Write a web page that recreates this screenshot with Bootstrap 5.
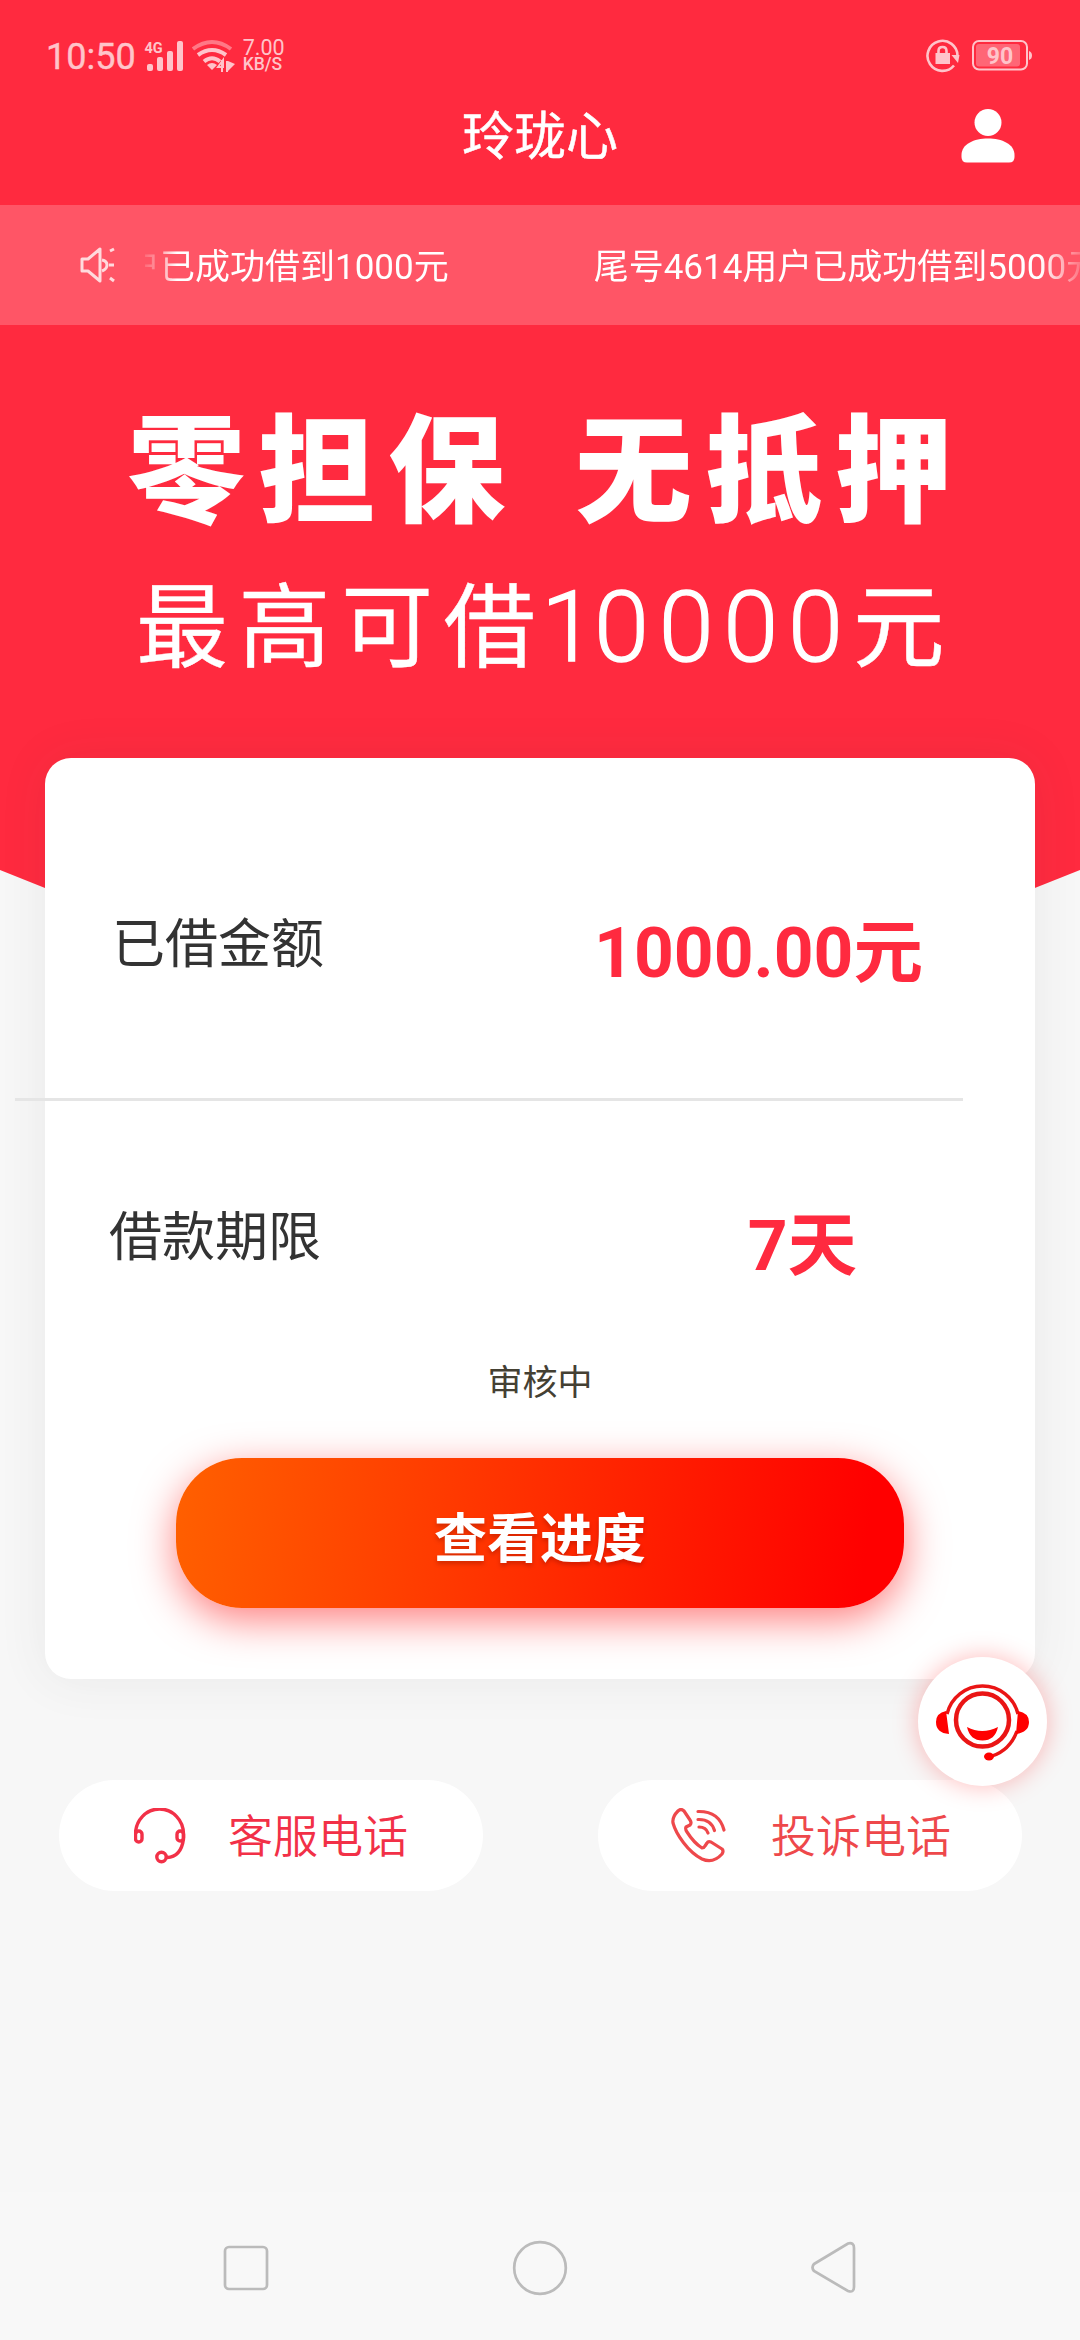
<!DOCTYPE html>
<html lang="zh-CN">
<head>
<meta charset="utf-8">
<meta name="viewport" content="width=device-width, initial-scale=1">
<title>玲珑心</title>
<link rel="stylesheet" href="https://cdn.jsdelivr.net/npm/bootstrap@5.3.0/dist/css/bootstrap.min.css">
<style>
body{font-family:Roboto,"Noto Sans CJK SC",sans-serif;background:#f7f7f7;line-height:1;color:#333;overflow:hidden}
svg{display:block;flex:none}
.screen{width:1080px;height:2340px;overflow:hidden}
.hero{background:#ff2a3f;height:936px;clip-path:polygon(0 0,100% 0,100% 870px,960px 918px,120px 918px,0 870px);margin-bottom:-178px;flex:none}
.status{height:100px;color:#ffc4ca;padding:39px 48px 0 46px}
.clock{font-size:36px;-webkit-text-stroke:.4px currentColor}
.signal{margin-left:7px}
.wifi{margin-left:9px}
.rate{font-size:21.500px;line-height:17px;margin-left:8px}
.rate-unit{font-size:17.500px;line-height:16px;font-weight:500}
.titlebar{height:105px;padding-top:12px;color:#fff}
.titlebar h1{font-size:52px;line-height:52px;font-weight:400;text-align:center;margin:0;width:156px;-webkit-text-stroke:.5px currentColor}
.side{width:100px}
.person{margin:-3px 0 0 -19px}
.notice{height:120px;background:#ff5566;color:#fff;font-size:35px;padding-left:80px}
.ticker{width:935px;height:60px;overflow:hidden;white-space:nowrap;margin-left:30px;padding-top:15px;
 -webkit-mask-image:linear-gradient(90deg,rgba(0,0,0,.15),rgba(0,0,0,.4) 14px,#000 32px,#000 895px,transparent 945px)}
.ticker span{margin-right:145px}
.ticker span:first-child{margin-left:-20px}
.slogan{font-family:"Noto Sans CJK SC",sans-serif;color:#fff;white-space:nowrap}
.slogan-a{font-weight:900;font-size:117px;line-height:122px;letter-spacing:13px;margin:76px 0 0 128px}
.slogan-a span+span{margin-left:57px}
.slogan-b{font-weight:400;font-size:92px;line-height:92px;letter-spacing:10.500px;margin:51px 0 0 136px;-webkit-text-stroke:.4px currentColor}
.digits{font-family:Roboto,sans-serif;font-weight:300;font-size:99px;line-height:0;letter-spacing:9.800px;margin-left:-5px;-webkit-text-stroke:1.300px currentColor;vertical-align:-1px}
.digits i{font-style:normal;letter-spacing:-2px}
.loan{margin:0 45px;border:0;border-radius:26px;height:921px;box-shadow:0 0 50px rgba(60,60,60,.08);flex:none}
.loan-row{height:340px;padding:161px 112px 0 67px;font-size:53px}
.loan-row strong{font-size:69.500px;font-weight:700;color:#ff2a3f}
.loan-row.term{height:264px;padding:111px 178px 0 64px}
.rule{height:3px;background:#e5e5e5;width:948px;margin-left:-30px;flex:none}
.state{font-size:35px;color:#444033;text-align:center;padding-top:1px}
.go{width:728px;height:150px;border:0;border-radius:66px;margin:57px 0 0 131px;background:linear-gradient(97deg,#ff6000,red 94%);box-shadow:0 12px 40px rgba(255,0,0,.5);color:#fff;font-size:53px;font-weight:700;line-height:1;padding:14px 0 0;text-shadow:0 3px 4px rgba(80,0,0,.25)}
.go:hover{color:#fff}
.calls{padding:101px 58px 0 59px}
.call-pill{width:424px;height:111px;border-radius:56px;background:#fff;border:0;font:350 45px/1 "Noto Sans CJK SC",sans-serif;color:#f23047}
.call-pill span{padding-bottom:4px;margin-left:42px}
.call-pill svg{margin-left:75px}
.call-pill.complaint{color:#ee484b}
.call-pill.complaint svg{margin-left:73px}
.call-pill.complaint span{margin-left:45px}
.fab{position:absolute;left:918px;top:1657px;width:129px;height:129px;border-radius:50%;background:#fff;box-shadow:0 0 26px rgba(255,0,0,.28)}
.sysnav{height:148px;background:#f8f8f8;padding:4px 223px 0 223px}
</style>
<script src="https://cdn.jsdelivr.net/npm/bootstrap@5.3.0/dist/js/bootstrap.bundle.min.js"></script>
</head>
<body>
<div class="screen position-relative d-flex flex-column">
 <header class="hero">
  <div class="status d-flex justify-content-between align-items-start">
   <div class="d-flex align-items-start">
    <span class="clock">10:50</span>
    <svg class="signal" width="40" height="34" viewBox="142 39 40 34" fill="#ffc4ca"><text x="143.500" y="52.500" font-size="14.500" font-weight="700">4G</text><rect x="146" y="64" width="6" height="7" rx="2"/><rect x="156" y="57" width="6" height="14" rx="2"/><rect x="166" y="51" width="6" height="20" rx="2"/><rect x="176" y="41" width="6" height="30" rx="2"/></svg>
    <svg class="wifi" width="43" height="34" viewBox="192 39 43 34" fill="none" stroke="#ffc4ca" stroke-width="4"><path d="M193 49Q212 35 231 49" stroke="#ff7886"/><path d="M198 55Q212 45 226 55M204 61.500Q212 55 220 61.500"/><path d="M207 65Q212 61 217 65L212 70Z" fill="#ffc4ca" stroke="none"/><path d="M218 67L223 60V67ZM222 60V72M227 61V72" stroke-width="2"/><path d="M228 61L235 64L228 71Z" fill="#ffc4ca" stroke="none"/></svg>
    <div class="rate"><div>7.00</div><div class="rate-unit">KB/S</div></div>
   </div>
   <div class="d-flex">
    <svg width="106" height="34" viewBox="926 39 106 34"><g fill="none" stroke="#ffc4ca" stroke-width="2.600"><path d="M954 65.500A15 15 0 1 1 957.500 56"/><path d="M938.500 54V51Q938.500 47 942.500 47Q946.500 47 946.500 51V54"/></g><path d="M935.500 53H950V64H935.500ZM951.500 55H959.500L958 63Z" fill="#ffc4ca"/><rect x="973" y="41" width="54" height="28.500" rx="6" fill="none" stroke="#ffc4ca" stroke-width="2"/><rect x="976" y="44" width="44" height="22.500" rx="3" fill="#ff6676"/><path d="M1029 51Q1032 52 1032 55.500Q1032 59 1029 60Z" fill="#ffc4ca"/><text x="1000" y="63.500" text-anchor="middle" font-size="23" font-weight="700" fill="#ffc4ca">90</text></svg>
   </div>
  </div>
  <div class="titlebar d-flex justify-content-between align-items-start">
   <span class="side"></span><h1>玲珑心</h1>
   <span class="side"><svg class="person" width="54" height="54" viewBox="0 0 54 54" fill="#fff"><circle cx="27" cy="13.500" r="13.500"/><path d="M.5 46C.5 35 13 29.500 27 29.500S53.500 35 53.500 46V48Q53.500 53.500 48 53.500H6Q.5 53.500 .5 48Z"/></svg></span>
  </div>
  <div class="notice d-flex align-items-center">
   <svg width="35" height="36" viewBox="0 0 35 36" fill="none" stroke="#ffdadd" stroke-width="3" stroke-linejoin="round"><path d="M2 12H8L20 2V34L8 24H2Z"/><path d="M22 13Q27 14 27 18Q27 22 22 24M29 18H34M30 4L34 2M30 31L34 34"/></svg>
   <div class="ticker"><span>户已成功借到1000元</span><span>尾号4614用户已成功借到5000元</span></div>
  </div>
  <div class="slogan slogan-a"><span>零担保</span><span>无抵押</span></div>
  <div class="slogan slogan-b">最高可借<span class="digits"><i>1</i>0000</span>元</div>
 </header>
 <main class="card loan">
  <div class="loan-row d-flex justify-content-between align-items-start"><span>已借金额</span><strong>1000.00元</strong></div>
  <div class="rule"></div>
  <div class="loan-row term d-flex justify-content-between align-items-start"><span>借款期限</span><strong>7天</strong></div>
  <div class="state">审核中</div>
  <button type="button" class="btn go">查看进度</button>
 </main>
 <div class="calls d-flex justify-content-between">
  <button class="btn call-pill d-flex align-items-center p-0" type="button">
   <svg width="52" height="56" viewBox="134 1808 52 56" fill="none" stroke="currentColor" stroke-width="3.400"><path d="M135.500 1834A24 25 0 1 1 183.500 1834V1839Q181 1857 167 1857.500"/><rect x="135.500" y="1831" width="6.500" height="11" rx="3.200"/><rect x="177" y="1831" width="6.500" height="10" rx="3.200"/><circle cx="161.500" cy="1857" r="4.700"/></svg>
   <span>客服电话</span></button>
  <button class="btn call-pill complaint d-flex align-items-center p-0" type="button">
   <svg width="55" height="56" viewBox="671 1808 55 56" fill="none" stroke="currentColor" stroke-width="3.200" stroke-linejoin="round" stroke-linecap="round"><path d="M678 1811Q681 1808 684 1811L690 1820Q692 1823 690 1825L686 1827Q685 1829 687 1832Q694 1843 702 1848Q704 1848 705 1846L707 1843Q708 1841 711 1842L722 1849Q724 1851 722 1854Q713 1864 702 1859C688 1852 676 1834 673 1823Q672 1817 678 1811Z"/><path d="M698 1811.500Q719 1811 724 1830M698 1819.500Q711 1819 714.500 1830.500M699 1827Q706 1827 708 1833"/></svg>
   <span>投诉电话</span></button>
 </div>
 <nav class="sysnav mt-auto d-flex justify-content-between align-items-center">
  <svg width="46" height="46" viewBox="0 0 46 46" fill="none" stroke="#bbb" stroke-width="2.700"><rect x="2" y="2" width="42" height="42" rx="4"/></svg>
  <svg width="56" height="56" viewBox="0 0 56 56" fill="none" stroke="#bbb" stroke-width="2.700"><circle cx="28" cy="28" r="25.800"/></svg>
  <svg width="46" height="54" viewBox="0 0 46 54" fill="none" stroke="#bbb" stroke-width="2.700"><path d="M3 23L37 2.500Q43 1 43 7V46Q43 52 37 50L3 30Q0 26.500 3 23Z"/></svg>
 </nav>
 <a class="fab" href="#" aria-label="客服"><svg width="129" height="129" viewBox="918 1657 129 129" fill="none" stroke="#ea1515"><circle cx="982.500" cy="1720" r="26.500" stroke-width="4.500"/><path d="M947 1714A36.500 36.500 0 0 1 1018 1714M1017 1731Q1010 1750 992 1756" stroke-width="3.400"/><path d="M946 1711L949 1734Q936 1733 936 1722Q936 1713 946 1711ZM1018 1711Q1029 1713 1029 1722Q1029 1732 1016 1734Z" fill="#f00" stroke="none"/><path d="M967 1727Q982 1735 998 1727Q995 1740.500 982.500 1740.500Q970 1740.500 967 1727Z" fill="#f00" stroke="none"/><ellipse cx="989" cy="1756.500" rx="5" ry="4" fill="#f00" stroke="none"/></svg></a>
</div>
</body>
</html>
